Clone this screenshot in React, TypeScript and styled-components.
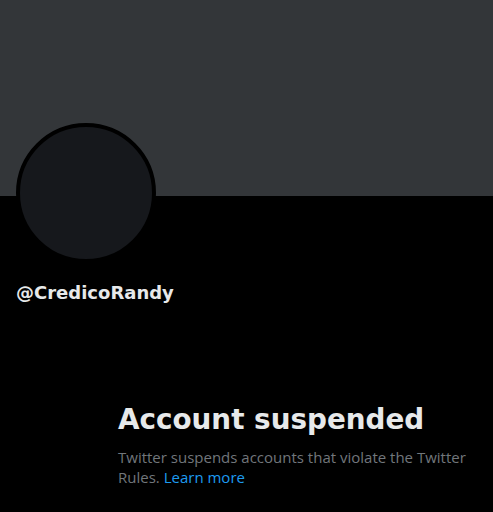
import React from "react";
import styled, { createGlobalStyle } from "styled-components";

const Global = createGlobalStyle`
  html, body { margin: 0; padding: 0; background: #000; }
  body { font-family: "Open Sans", "Liberation Sans", Arial, sans-serif; }
`;

const Page = styled.div`
  width: 493px;
  height: 512px;
  background: #000;
  overflow: hidden;
  display: flex;
  flex-direction: column;
`;

const Banner = styled.div`
  height: 196px;
  background: #333639;
  flex-shrink: 0;
`;

const ProfileHeader = styled.div`
  padding: 0 16px;
  display: flex;
  flex-direction: column;
`;

const Avatar = styled.div`
  width: 132px;
  height: 132px;
  margin-top: -73px;
  border-radius: 50%;
  border: 4px solid #000;
  background: #16181c;
`;

const Handle = styled.div`
  margin-top: 18px;
  color: #e7e9ea;
  font-family: "DejaVu Sans", "Open Sans", sans-serif;
  font-weight: 700;
  font-size: 18px;
  line-height: 24px;
`;

const Empty = styled.div`
  margin-top: 97px;
  padding-left: 118px;
  width: 356px;
  display: flex;
  flex-direction: column;
`;

const Title = styled.h2`
  margin: 0;
  color: #e7e9ea;
  font-family: "DejaVu Sans", "Open Sans", sans-serif;
  font-weight: 700;
  font-size: 27.8px;
  line-height: 36px;
`;

const Body = styled.p`
  margin: 9px 0 0;
  color: #71767b;
  font-size: 15px;
  line-height: 20px;
`;

const Link = styled.a`
  color: #1d9bf0;
  text-decoration: none;
`;

export default function App() {
  return (
    <Page>
      <Global />
      <Banner />
      <ProfileHeader>
        <Avatar />
        <Handle>@CredicoRandy</Handle>
      </ProfileHeader>
      <Empty>
        <Title>Account suspended</Title>
        <Body>
          Twitter suspends accounts that violate the Twitter Rules.{" "}
          <Link href="#">Learn more</Link>
        </Body>
      </Empty>
    </Page>
  );
}
